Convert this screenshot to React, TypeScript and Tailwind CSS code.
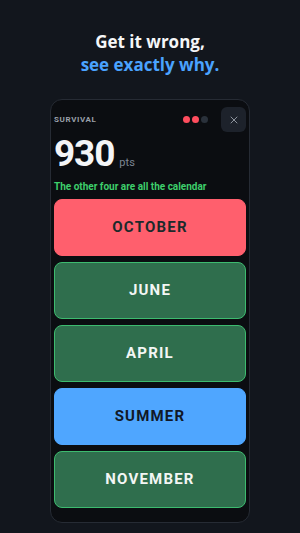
import { X } from "lucide-react";

const options = [
  { label: "OCTOBER", cls: "bg-[#ff5f6d] text-[#1c2a2b] border-[#ff5f6d]" },
  { label: "JUNE", cls: "bg-[#2f6e4d] text-[#f3f6f4] border-[#3dbb6f]" },
  { label: "APRIL", cls: "bg-[#2f6e4d] text-[#f3f6f4] border-[#3dbb6f]" },
  { label: "SUMMER", cls: "bg-[#4fa6ff] text-[#111827] border-[#4fa6ff]" },
  { label: "NOVEMBER", cls: "bg-[#2f6e4d] text-[#f3f6f4] border-[#3dbb6f]" },
];

export default function App() {
  return (
    <div className="w-[300px] h-[533px] bg-[#12161d] flex flex-col items-center font-['Roboto',sans-serif] overflow-hidden">
      <div className="pt-[30px] text-center font-['Open_Sans',sans-serif] font-bold text-[17px] leading-[23px]">
        <div className="text-[#f5f6f8]">Get it wrong,</div>
        <div className="text-[#4aa3ff]">see exactly why.</div>
      </div>

      <div className="mt-[23px] w-[200px] h-[424px] rounded-[12px] border border-[#262b34] bg-[#0b0d11] px-[3px] flex flex-col">
        <div className="flex items-center justify-between pt-[7px]">
          <span className="text-[8px] font-bold tracking-[0.08em] text-[#9aa0aa]">SURVIVAL</span>
          <div className="flex items-center gap-[13px]">
            <div className="flex gap-[2px]">
              <span className="w-[7px] h-[7px] rounded-full bg-[#ff4d5e]" />
              <span className="w-[7px] h-[7px] rounded-full bg-[#ff4d5e]" />
              <span className="w-[7px] h-[7px] rounded-full bg-[#2a313b]" />
            </div>
            <div className="w-[25px] h-[25px] rounded-[6px] bg-[#1d222b] flex items-center justify-center">
              <X size={12} strokeWidth={1.6} className="text-[#aab0ba]" />
            </div>
          </div>
        </div>

        <div className="flex items-end gap-[5px] mt-[3px] leading-none">
          <span className="text-[37px] font-bold text-[#f4f5f7] tracking-[-0.03em]">930</span>
          <span className="text-[11px] text-[#7d8591] mb-[4px]">pts</span>
        </div>
        <div className="mt-[7px] text-[10px] font-bold text-[#3ecf6c]">The other four are all the calendar</div>

        <div className="mt-[5px] flex flex-col gap-[6px]">
          {options.map((o) => (
            <div
              key={o.label}
              className={`h-[57px] rounded-[8px] border flex items-center justify-center text-[15px] font-bold tracking-[0.08em] ${o.cls}`}
            >
              {o.label}
            </div>
          ))}
        </div>
      </div>
    </div>
  );
}
